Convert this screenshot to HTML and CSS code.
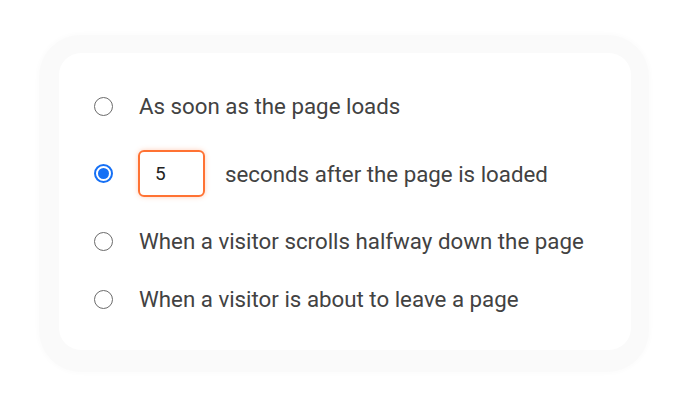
FILE: index.html
```html
<!DOCTYPE html>
<html>
<head>
<meta charset="utf-8">
<link rel="stylesheet" href="styles.css">
</head>
<body>
<div class="frame">
  <div class="card">
    <label class="row">
      <span class="radio"></span>
      <span class="label">As soon as the page loads</span>
    </label>
    <label class="row">
      <span class="radio checked"></span>
      <span class="field">5</span>
      <span class="label after">seconds after the page is loaded</span>
    </label>
    <label class="row">
      <span class="radio"></span>
      <span class="label">When a visitor scrolls halfway down the page</span>
    </label>
    <label class="row">
      <span class="radio"></span>
      <span class="label">When a visitor is about to leave a page</span>
    </label>
  </div>
</div>
</body>
</html>
```

FILE: styles.css
```css
html, body {
  margin: 0;
  padding: 0;
  background: #ffffff;
}
body {
  width: 687px;
  height: 410px;
  font-family: Roboto, "Liberation Sans", sans-serif;
}
.frame {
  position: absolute;
  left: 39px;
  top: 35px;
  width: 572px;
  padding: 18px 18px 22px 20px;
  background: #fafafa;
  border-radius: 42px;
  box-shadow: 0 0 4px 2px #fcfcfc;
}
.card {
  background: #ffffff;
  border-radius: 22px;
  padding: 39px 20px 37px 35px;
  display: flex;
  flex-direction: column;
  gap: 30px;
}
.row {
  display: flex;
  align-items: center;
  min-height: 28px;
}
.radio {
  box-sizing: border-box;
  width: 19px;
  height: 19px;
  border: 1.6px solid #6b6b6b;
  border-radius: 50%;
  margin-right: 26px;
  flex: none;
  position: relative;
}
.radio.checked {
  border: 2px solid #1670f5;
}
.radio.checked::after {
  content: "";
  position: absolute;
  left: 2px;
  top: 2px;
  width: 11px;
  height: 11px;
  border-radius: 50%;
  background: #1670f5;
}
.label {
  font-size: 22.3px;
  color: #424242;
  line-height: 28px;
  white-space: nowrap;
}
.field {
  box-sizing: border-box;
  width: 67px;
  height: 47px;
  border: 2px solid #ff7233;
  border-radius: 6px;
  box-shadow: 0 0 5px rgba(255, 120, 60, 0.35);
  font-size: 19px;
  color: #222;
  display: flex;
  align-items: center;
  padding-left: 15px;
  margin-left: -1px;
}
.after {
  margin-left: 20px;
}
```
